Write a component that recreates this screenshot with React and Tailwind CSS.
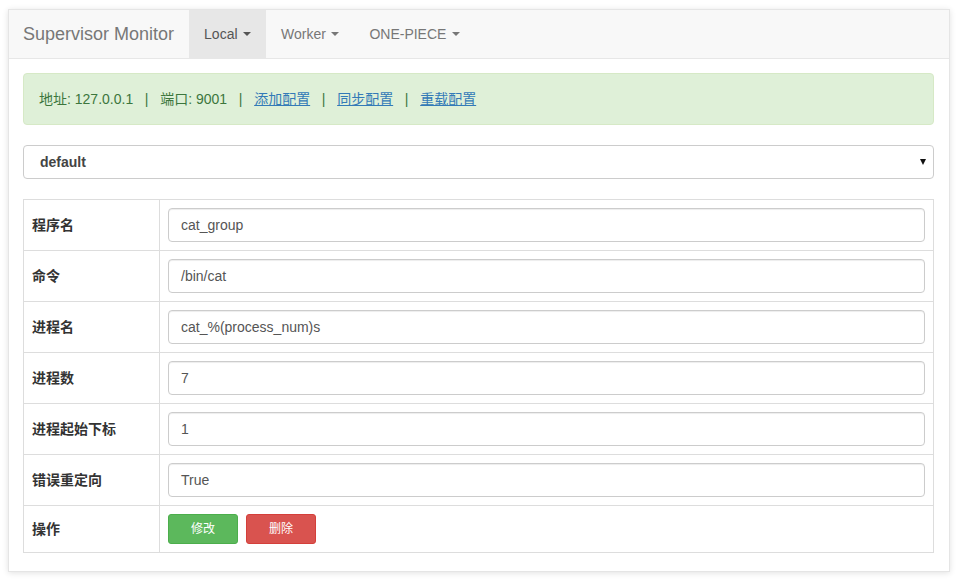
import React from 'react';

const FONT = { fontFamily: '"Liberation Sans", "Noto Sans CJK SC", Arial, sans-serif' };

const Caret = () => (
    <span className="inline-block ml-[5.5px] align-middle w-0 h-0 border-t-[4px] border-t-current border-x-[4px] border-x-transparent" />
);

const rows = [
    { label: '程序名', value: 'cat_group' },
    { label: '命令', value: '/bin/cat' },
    { label: '进程名', value: 'cat_%(process_num)s' },
    { label: '进程数', value: '7' },
    { label: '进程起始下标', value: '1' },
    { label: '错误重定向', value: 'True' },
];

const Sep = () => <span className="mx-[11.7px]">|</span>;

const App = () => {
    return (
        <div className="min-h-screen w-full bg-white pt-[9px] pl-[8px] text-[14px] text-[#333]" style={FONT}>
            <div className="w-[942px] bg-white border border-[#e5e5e5] shadow-[0_1px_6px_rgba(0,0,0,0.12)] pb-[18px]">
                {/* Navbar */}
                <div className="h-[49px] flex items-stretch bg-[#f8f8f8] border-b border-[#e7e7e7] pl-[14px] pr-[15px]">
                    <div className="flex items-center pr-[15px] text-[18px] text-[#777]">Supervisor Monitor</div>
                    <div className="flex items-center px-[15px] bg-[#e7e7e7] text-[#555]">
                        Local<Caret />
                    </div>
                    <div className="flex items-center px-[15px] text-[#777]">
                        Worker<Caret />
                    </div>
                    <div className="flex items-center px-[15px] text-[#777]">
                        ONE-PIECE<Caret />
                    </div>
                </div>

                <div className="pl-[14px] pr-[15px] pt-[14px]">
                    {/* Alert */}
                    <div className="h-[52px] flex items-center px-[15px] bg-[#dff0d8] border border-[#d6e9c6] rounded-[4px] text-[#3c763d] leading-[20px]">
                        <span>地址: 127.0.0.1</span>
                        <Sep />
                        <span>端口: 9001</span>
                        <Sep />
                        <a className="text-[#337ab7] underline">添加配置</a>
                        <Sep />
                        <a className="text-[#337ab7] underline">同步配置</a>
                        <Sep />
                        <a className="text-[#337ab7] underline">重载配置</a>
                    </div>

                    {/* Select */}
                    <div className="mt-[20px] h-[34px] flex items-center justify-between pl-[16px] pr-[7px] border border-[#ccc] rounded-[4px] bg-white">
                        <span className="font-bold text-[#444]">default</span>
                        <span className="w-0 h-0 border-t-[6px] border-t-[#111] border-x-[3.5px] border-x-transparent" />
                    </div>

                    {/* Table */}
                    <table className="mt-[20px] w-full border-collapse border border-[#ddd]">
                        <tbody>
                            {rows.map((r) => (
                                <tr key={r.label} className="border-b border-[#ddd]">
                                    <td className="w-[136px] px-[8px] py-[8px] border-r border-[#ddd] font-bold text-[#333]">{r.label}</td>
                                    <td className="px-[8px] py-[8px]">
                                        <div className="h-[34px] flex items-center px-[12px] border border-[#ccc] rounded-[4px] text-[#555] shadow-[inset_0_1px_1px_rgba(0,0,0,0.075)]">
                                            {r.value}
                                        </div>
                                    </td>
                                </tr>
                            ))}
                            <tr>
                                <td className="w-[136px] px-[8px] py-[8px] border-r border-[#ddd] font-bold text-[#333]">操作</td>
                                <td className="px-[8px] py-[8px]">
                                    <div className="flex gap-[8px]">
                                        <button className="w-[70px] h-[30px] text-[12px] text-white bg-[#5cb85c] border border-[#4cae4c] rounded-[3px]">修改</button>
                                        <button className="w-[70px] h-[30px] text-[12px] text-white bg-[#d9534f] border border-[#d43f3a] rounded-[3px]">删除</button>
                                    </div>
                                </td>
                            </tr>
                        </tbody>
                    </table>
                </div>
            </div>
        </div>
    );
};

export default App;
